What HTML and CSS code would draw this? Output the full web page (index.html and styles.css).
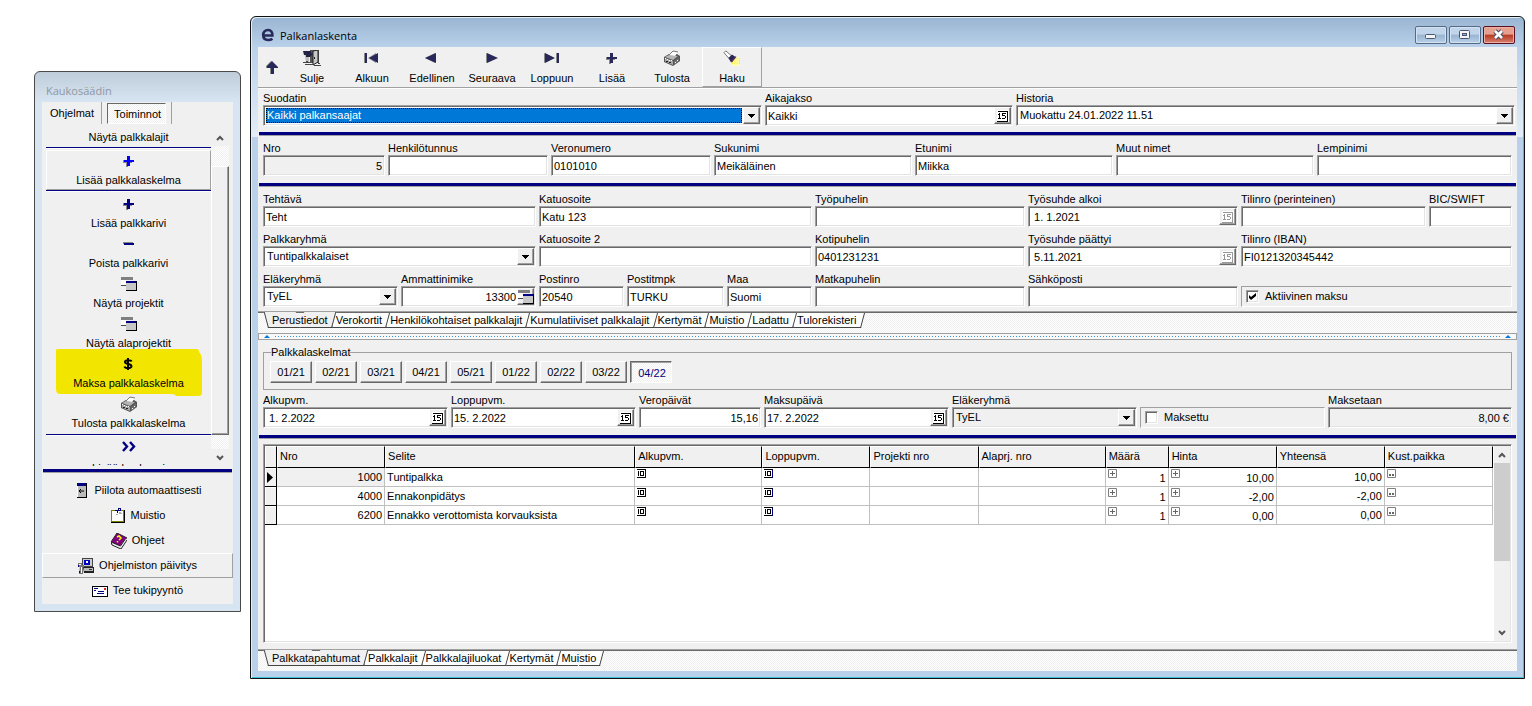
FILE: index.html
```html
<!DOCTYPE html>
<html lang="fi">
<head>
<meta charset="utf-8">
<title>Palkanlaskenta</title>
<link rel="stylesheet" href="styles.css">
</head>
<body>
<svg class="sprite" aria-hidden="true">
  <symbol id="i-printer" viewBox="0 0 16 16">
    <path d="M0 7l5-3h8l3 2v5l-7 5-9-4z" fill="#555"/>
    <path d="M1 7l4-2 9 1-5 4z" fill="#b4b4b4"/>
    <path d="M5 5l4-4 5 1-3 4z" fill="#fff"/>
    <path d="M5 5l4-4 5 1" fill="none" stroke="#777"/>
    <path d="M1 8l8 3v4l-8-3.500z" fill="#a8a8a8"/>
    <path d="M10 11l5-4v4l-5 4z" fill="#6c6c6c"/>
    <path d="M1 8h1v1H1zM3 9h1v1H3zM5 10h1v1H5zM7 10h1v1H7zM11 12h1v1h-1zM13 10h1v1h-1z" fill="#fff"/>
    <path d="M2 11h2v1H2zM5 12h2v1H5z" fill="#222"/>
  </symbol>
  <symbol id="i-windows" viewBox="0 0 16 16">
    <path d="M0 1h12v3H0z" fill="#808080"/><path d="M0 4h5v6H0z" fill="#fff"/><path d="M0 9h5v1H0z" fill="#444"/>
    <path d="M5 5h11v10H5z" fill="#000"/><path d="M5 5h10v9H5z" fill="#c8c8c8"/><path d="M5 5h10v2H5z" fill="#000080"/>
  </symbol>
  <symbol id="i-plus" viewBox="0 0 16 16"><path d="M2 7h4V3h1v4h4v3H7v4H5v-4H2z" fill="#888"/><path d="M3 7h3V3h3v4h4v2H9v4H6V9H3z" fill="currentColor"/></symbol>
  <symbol id="i-minus" viewBox="0 0 16 16"><path d="M2 6h10v2H2z" fill="#888"/><path d="M3 7h10v2H3z" fill="currentColor"/></symbol>
  <symbol id="i-cal" viewBox="0 0 12 12"><path d="M0 0h12v12H0z" class="cal-paper"/><path d="M1 1h10v1H1zM0 11h11v1H0z" fill="currentColor"/><path d="M10 2h1v9h-1z" class="cal-side"/><path d="M2 3h1v5h1v1H1V8h1V5H1V4h1zM5 3h4v1H6v1h2v1h1v2H8v1H5V8h3V6H5z" fill="currentColor"/></symbol>
  <symbol id="i-ten" viewBox="0 0 9 9"><path d="M0 0h9v9H0z" fill="#000"/><path d="M0 1h8v7H0z" fill="#fff"/><path d="M1 2h1v5H1zM3 2h4v5H3z" fill="#000"/><path d="M4 3h2v3H4z" fill="#fff"/><path d="M8 1h1v8H8z" fill="#000080"/></symbol>
  <symbol id="i-exp" viewBox="0 0 9 9"><path d="M.5.5h8v8h-8z" fill="#fff" stroke="#808080"/><path d="M2 4h5v1H2zM4 2h1v5H4z" fill="#666"/></symbol>
  <symbol id="i-dots" viewBox="0 0 9 9"><path d="M.5.5h8v8h-8z" fill="#fff" stroke="#808080"/><path d="M2 5h2v2H2zM5 5h2v2H5z" fill="#666"/></symbol>
  <symbol id="i-drop" viewBox="0 0 7 4"><path d="M0 0h7v1H6v1H5v1H4v1H3V3H2V2H1V1H0z" fill="#000"/></symbol>
  <symbol id="i-up" viewBox="0 0 8 6"><path d="M1 5l3-3 3 3" fill="none" stroke="#555" stroke-width="2"/></symbol>
  <symbol id="i-down" viewBox="0 0 8 6"><path d="M1 1l3 3 3-3" fill="none" stroke="#555" stroke-width="2"/></symbol>
</svg>

<main class="desktop">
  <aside class="window palette">
    <header class="palette-title">Kaukosäädin</header>
    <div class="palette-body">
      <nav class="modes">
        <button type="button" class="mode">Ohjelmat</button>
        <button type="button" class="mode mode-on"><span>Toiminnot</span></button>
      </nav>
      <div class="actions">
        <div class="action-list">
          <button type="button" class="action action-first">Näytä palkkalajit</button>
          <hr class="thin">
          <button type="button" class="action action-hot"><svg class="ico bright"><use href="#i-plus"/></svg>Lisää palkkalaskelma</button>
          <hr class="thin thin-wide">
          <button type="button" class="action"><svg class="ico navy"><use href="#i-plus"/></svg>Lisää palkkarivi</button>
          <button type="button" class="action"><svg class="ico navy"><use href="#i-minus"/></svg>Poista palkkarivi</button>
          <button type="button" class="action"><svg class="ico"><use href="#i-windows"/></svg>Näytä projektit</button>
          <button type="button" class="action"><svg class="ico"><use href="#i-windows"/></svg>Näytä alaprojektit</button>
          <button type="button" class="action marked">
            <svg class="marker" viewBox="0 0 146 47" preserveAspectRatio="none"><path d="M1 0h140q2 0 2 3 3 2 3 10v31q0 3-4 3h-22q-1-2-4-2H4q-4 0-4-5V2q0-2 1-2z" fill="#f2e600"/></svg>
            <svg class="ico" viewBox="0 0 16 16"><path d="M7 2v12M10.500 5.500C10 4 4 3.500 4 6s6.500 1.500 6.500 4.200S4 12.500 3.500 10.500" fill="none" stroke="#000" stroke-width="2"/></svg>Maksa palkkalaskelma</button>
          <button type="button" class="action"><svg class="ico"><use href="#i-printer"/></svg>Tulosta palkkalaskelma</button>
          <hr class="thin">
          <button type="button" class="action action-last"><svg class="ico navy" viewBox="0 0 16 16"><path d="M2 3l4 4.500L2 12M9 3l4 4.500L9 12" fill="none" stroke="currentColor" stroke-width="2.400"/></svg>Lisää kuukausi</button>
        </div>
        <div class="scroller">
          <button type="button" class="scroll-btn" aria-label="Ylös"><svg class="chev"><use href="#i-up"/></svg></button>
          <div class="scroll-track"><div class="scroll-thumb"></div></div>
          <button type="button" class="scroll-btn" aria-label="Alas"><svg class="chev"><use href="#i-down"/></svg></button>
        </div>
      </div>
      <hr class="bar">
      <div class="links">
        <button type="button" class="link"><svg class="ico" viewBox="0 0 16 16"><path d="M3 0h10v15H3z" fill="#000"/><path d="M3 0h9v14H3z" fill="#bbb"/><path d="M3 0h9v3H3z" fill="#000080"/><path d="M3 3h1v11H3z" fill="#fff"/><path d="M5 8h5M7 6L5 8l2 2" fill="none" stroke="#000"/></svg>Piilota automaattisesti</button>
        <button type="button" class="link"><svg class="ico" viewBox="0 0 16 16"><path d="M1 2h14v13H1z" fill="#000"/><path d="M1 2h13v12H1z" fill="#808000"/><path d="M2 3h11v10H2z" fill="#fff"/><path d="M5 2h6v1H5z" fill="#000080"/><path d="M8 0h3v3H8zM7 3h1v2H7z" fill="#000080"/><path d="M9 1h1v1H9z" fill="#fff"/><path d="M9 4h2v1h1v1H9zM6 6h2v1H6z" fill="#aaa"/></svg>Muistio</button>
        <button type="button" class="link"><svg class="ico" viewBox="0 0 16 16"><path d="M0 9l6-9 10 5-6 10z" fill="#800080"/><path d="M0 9l9 4 6-8 1 2-6 9-9-4z" fill="#eee"/><path d="M0 9l1 3 9 4 6-9M0 9l9.500 4L15 5M0 9L6 0l10 5" fill="none" stroke="#222"/><path d="M6 4l2-1 2 2-2 2M6.500 8v1.500" fill="none" stroke="#ff0" stroke-width="1.500"/></svg>Ohjeet</button>
        <button type="button" class="link link-hot"><svg class="ico" viewBox="0 0 16 16"><path d="M4 0h11v9H4z" fill="#444"/><path d="M5 1h9v7H5z" fill="#ccc"/><path d="M6 2h6v5H6z" fill="#0000c0"/><path d="M8 3h2v2H8z" fill="#fff"/><path d="M5 9h11v6H6z" fill="#222"/><path d="M6 10h9v3H6z" fill="#bbb"/><path d="M11 11h3v1h-3z" fill="#333"/><path d="M0 5h4v2h2v2H0zM2 8h3v8H1z" fill="#777"/><path d="M1 6h2v1H1zM3 9h1v6H3z" fill="#fff"/><path d="M0 7h1v2H0zM1 13h1v2H1z" fill="#000080"/></svg>Ohjelmiston päivitys</button>
        <button type="button" class="link"><svg class="ico" viewBox="0 0 16 16"><path d="M0 3h16v11H0z" fill="#000"/><path d="M1 4h14v9H1z" fill="#fff"/><path d="M2 5h4v1H2zM2 7h2v1H2z" fill="#000080"/><path d="M6 8h6v1H6zM5 10h7v1H5z" fill="#000080"/><path d="M12 5h2v2h-2z" fill="#e02020"/></svg>Tee tukipyyntö</button>
      </div>
    </div>
  </aside>

  <section class="window payroll">
    <header class="titlebar">
      <svg class="logo" viewBox="0 0 14 14"><path d="M3 7.500h8.400C11.600 4.300 9.900 2 7.100 2 4.100 2 2.200 4.200 2.200 7.100c0 3 2 4.900 5 4.900 1.700 0 3.100-.4 4.200-1.300" fill="none" stroke="#28285a" stroke-width="2.600"/></svg>
      <h1 class="caption">Palkanlaskenta</h1>
      <div class="win-buttons">
        <button type="button" class="win-btn" aria-label="Pienennä"><svg viewBox="0 0 30 16"><rect x="9.500" y="7.500" width="10" height="4" rx="1" fill="#f4f4f4" stroke="#4a5670"/></svg></button>
        <button type="button" class="win-btn" aria-label="Suurenna"><svg viewBox="0 0 30 16"><rect x="9.500" y="3.500" width="10" height="8" rx="1" fill="#f4f4f4" stroke="#4a5670"/><rect x="12.500" y="6.500" width="4" height="2" fill="#8fb0d4" stroke="#4a5670"/></svg></button>
        <button type="button" class="win-btn win-close" aria-label="Sulje ikkuna"><svg viewBox="0 0 30 16"><path d="M11 4l7 7M18 4l-7 7" stroke="#4a4a60" stroke-width="4.600"/><path d="M11 4l7 7M18 4l-7 7" stroke="#fff" stroke-width="2.600"/></svg></button>
      </div>
    </header>

    <div class="client">
      <nav class="toolbar">
        <button type="button" class="tool-up" aria-label="Ylös"><svg class="ico" viewBox="0 0 16 16"><path d="M7 2l5 5v2H9v6H6V9H2V7z" fill="#888"/><path d="M8 2l6 6v1h-4v6H7V9H3V7z" fill="#28285a"/></svg></button>
        <button type="button" class="tool"><svg class="ico wide" viewBox="0 0 18 16"><path d="M7 0h9v13H7z" fill="#555"/><path d="M10 1l5-1v12l-5 3z" fill="#c8c8c8" stroke="#222"/><path d="M11 7h1v2h-1z" fill="#222"/><path d="M1 1h5v11H3z" fill="#bbb"/><path d="M0 1h8v2l2 1-3 3H3V5H1z" fill="#222244"/><path d="M0 12h7v1H0zM2 14h8v1H2zM11 15h7v1h-7zM3 11h2v1H3zM15 13h2v1h-2z" fill="#444"/></svg>Sulje</button>
        <button type="button" class="tool"><svg class="ico" viewBox="0 0 16 16"><path d="M0 3h2v10H0zM12 3v10L4 8z" fill="#888"/><path d="M1 3h2v10H1zM14 3v10L5 8z" fill="#28285a"/></svg>Alkuun</button>
        <button type="button" class="tool"><svg class="ico" viewBox="0 0 16 16"><path d="M11 3v10L1 8z" fill="#888"/><path d="M12 3v10L1 8z" fill="#28285a"/></svg>Edellinen</button>
        <button type="button" class="tool"><svg class="ico" viewBox="0 0 16 16"><path d="M2 3v10l10-5z" fill="#888"/><path d="M3 3v10l11-5z" fill="#28285a"/></svg>Seuraava</button>
        <button type="button" class="tool"><svg class="ico" viewBox="0 0 16 16"><path d="M0 3v10l10-5zM12 3h2v10h-2z" fill="#888"/><path d="M1 3v10l10-5zM13 3h2v10h-2z" fill="#28285a"/></svg>Loppuun</button>
        <button type="button" class="tool"><svg class="ico ink"><use href="#i-plus"/></svg>Lisää</button>
        <button type="button" class="tool"><svg class="ico"><use href="#i-printer"/></svg>Tulosta</button>
        <button type="button" class="tool tool-hot"><svg class="ico wide" viewBox="0 0 18 18"><path d="M9 8h9v10H9z" fill="#ffffc0"/><path d="M9 13h1v1H9zM11 11h1v1h-1zM13 9h1v1h-1zM15 9h1v1h-1zM17 9h1v1h-1zM13 11h1v1h-1zM15 11h1v1h-1zM17 11h1v1h-1zM11 13h1v1h-1zM13 13h1v1h-1zM15 13h1v1h-1zM17 13h1v1h-1zM9 15h1v1H9zM11 15h1v1h-1zM13 15h1v1h-1zM15 15h1v1h-1zM17 15h1v1h-1z" fill="#ffe800"/><path d="M0 3l2-2 7 6-3 3z" fill="#fff" stroke="#666"/><path d="M5 9l4-4 4 3-5 6z" fill="#28285a"/><path d="M8 13l5-6 1 1-5 6z" fill="#603060"/></svg>Haku</button>
      </nav>

      <div class="section filter">
        <div class="field"><label for="f1">Suodatin</label><div class="box"><select id="f1" class="chosen"><option>Kaikki palkansaajat</option></select><span class="drop"><svg><use href="#i-drop"/></svg></span></div></div>
        <div class="field"><label for="f2">Aikajakso</label><div class="box"><input id="f2" value="Kaikki"><button type="button" class="pick" aria-label="Kalenteri"><svg><use href="#i-cal"/></svg></button></div></div>
        <div class="field"><label for="f3">Historia</label><div class="box"><select id="f3"><option>Muokattu 24.01.2022 11.51</option></select><span class="drop"><svg><use href="#i-drop"/></svg></span></div></div>
      </div>
      <hr class="bar">

      <div class="section person">
        <div class="field"><label for="p1">Nro</label><div class="box ro"><input id="p1" class="num" value="5" readonly></div></div>
        <div class="field"><label for="p2">Henkilötunnus</label><div class="box"><input id="p2"></div></div>
        <div class="field"><label for="p3">Veronumero</label><div class="box"><input id="p3" value="0101010"></div></div>
        <div class="field"><label for="p4">Sukunimi</label><div class="box"><input id="p4" value="Meikäläinen"></div></div>
        <div class="field"><label for="p5">Etunimi</label><div class="box"><input id="p5" value="Miikka"></div></div>
        <div class="field"><label for="p6">Muut nimet</label><div class="box"><input id="p6"></div></div>
        <div class="field"><label for="p7">Lempinimi</label><div class="box"><input id="p7"></div></div>
      </div>
      <hr class="bar">

      <div class="details">
        <div class="row row-a">
          <div class="field"><label for="a1">Tehtävä</label><div class="box"><input id="a1" value="Teht"></div></div>
          <div class="field"><label for="a2">Katuosoite</label><div class="box"><input id="a2" value="Katu 123"></div></div>
          <div class="field"><label for="a3">Työpuhelin</label><div class="box"><input id="a3"></div></div>
          <div class="field"><label for="a4">Työsuhde alkoi</label><div class="box"><input id="a4" value=" 1. 1.2021"><button type="button" class="pick" disabled aria-label="Kalenteri"><svg><use href="#i-cal"/></svg></button></div></div>
          <div class="field"><label for="a5">Tilinro (perinteinen)</label><div class="box"><input id="a5"></div></div>
          <div class="field"><label for="a6">BIC/SWIFT</label><div class="box"><input id="a6"></div></div>
        </div>
        <div class="row row-b">
          <div class="field"><label for="b1">Palkkaryhmä</label><div class="box"><select id="b1"><option>Tuntipalkkalaiset</option></select><span class="drop"><svg><use href="#i-drop"/></svg></span></div></div>
          <div class="field"><label for="b2">Katuosoite 2</label><div class="box"><input id="b2"></div></div>
          <div class="field"><label for="b3">Kotipuhelin</label><div class="box"><input id="b3" value="0401231231"></div></div>
          <div class="field"><label for="b4">Työsuhde päättyi</label><div class="box"><input id="b4" value=" 5.11.2021"><button type="button" class="pick" disabled aria-label="Kalenteri"><svg><use href="#i-cal"/></svg></button></div></div>
          <div class="field"><label for="b5">Tilinro (IBAN)</label><div class="box"><input id="b5" value="FI0121320345442"></div></div>
        </div>
        <div class="row row-c">
          <div class="field"><label for="c1">Eläkeryhmä</label><div class="box"><select id="c1"><option>TyEL</option></select><span class="drop"><svg><use href="#i-drop"/></svg></span></div></div>
          <div class="field"><label for="c2">Ammattinimike</label><div class="box"><input id="c2" class="num" value="13300"><button type="button" class="pick" aria-label="Valitse"><svg><use href="#i-windows"/></svg></button></div></div>
          <div class="field"><label for="c3">Postinro</label><div class="box"><input id="c3" value="20540"></div></div>
          <div class="field"><label for="c4">Postitmpk</label><div class="box"><input id="c4" value="TURKU"></div></div>
          <div class="field"><label for="c5">Maa</label><div class="box"><input id="c5" value="Suomi"></div></div>
          <div class="field"><label for="c6">Matkapuhelin</label><div class="box"><input id="c6"></div></div>
          <div class="field"><label for="c7">Sähköposti</label><div class="box"><input id="c7"></div></div>
          <label class="check"><input type="checkbox" checked>Aktiivinen maksu</label>
        </div>
      </div>

      <nav class="tabs">
        <button type="button" class="tab tab-on">Perustiedot</button>
        <button type="button" class="tab">Verokortit</button>
        <button type="button" class="tab">Henkilökohtaiset palkkalajit</button>
        <button type="button" class="tab">Kumulatiiviset palkkalajit</button>
        <button type="button" class="tab">Kertymät</button>
        <button type="button" class="tab">Muistio</button>
        <button type="button" class="tab">Ladattu</button>
        <button type="button" class="tab">Tulorekisteri</button>
      </nav>
      <div class="splitter"><i class="tri"></i><i class="dots"></i><i class="tri"></i></div>

      <fieldset class="periods">
        <legend>Palkkalaskelmat</legend>
        <div class="period-row">
          <button type="button" class="period">01/21</button>
          <button type="button" class="period">02/21</button>
          <button type="button" class="period">03/21</button>
          <button type="button" class="period">04/21</button>
          <button type="button" class="period">05/21</button>
          <button type="button" class="period">01/22</button>
          <button type="button" class="period">02/22</button>
          <button type="button" class="period">03/22</button>
          <button type="button" class="period period-on">04/22</button>
        </div>
      </fieldset>

      <div class="section slip">
        <div class="field"><label for="s1">Alkupvm.</label><div class="box"><input id="s1" value=" 1. 2.2022"><button type="button" class="pick" aria-label="Kalenteri"><svg><use href="#i-cal"/></svg></button></div></div>
        <div class="field"><label for="s2">Loppupvm.</label><div class="box"><input id="s2" value="15. 2.2022"><button type="button" class="pick" aria-label="Kalenteri"><svg><use href="#i-cal"/></svg></button></div></div>
        <div class="field"><label for="s3">Veropäivät</label><div class="box"><input id="s3" class="num" value="15,16"></div></div>
        <div class="field"><label for="s4">Maksupäivä</label><div class="box"><input id="s4" value="17. 2.2022"><button type="button" class="pick" aria-label="Kalenteri"><svg><use href="#i-cal"/></svg></button></div></div>
        <div class="field"><label for="s5">Eläkeryhmä</label><div class="box ro"><select id="s5"><option>TyEL</option></select><span class="drop"><svg><use href="#i-drop"/></svg></span></div></div>
        <label class="check"><input type="checkbox">Maksettu</label>
        <div class="field"><label for="s6">Maksetaan</label><div class="box ro"><input id="s6" class="num" value="8,00 €" readonly></div></div>
      </div>
      <hr class="bar">

      <div class="grid">
        <div class="grid-view">
          <table class="lines">
            <colgroup><col class="w-mark"><col class="w-m"><col class="w-xl"><col class="w-l"><col class="w-m"><col class="w-m"><col class="w-l"><col class="w-s"><col class="w-m"><col class="w-m"><col class="w-m"></colgroup>
            <thead><tr><th></th><th>Nro</th><th>Selite</th><th>Alkupvm.</th><th>Loppupvm.</th><th>Projekti nro</th><th>Alaprj. nro</th><th>Määrä</th><th>Hinta</th><th>Yhteensä</th><th>Kust.paikka</th></tr></thead>
            <tbody>
              <tr><td class="mark"><svg viewBox="0 0 6 11"><path d="M0 0l6 5.500L0 11z" fill="#000"/></svg></td><td class="r current">1000</td><td>Tuntipalkka</td><td><svg class="mini"><use href="#i-ten"/></svg></td><td><svg class="mini"><use href="#i-ten"/></svg></td><td></td><td></td><td><div class="split"><svg class="mini"><use href="#i-exp"/></svg>1</div></td><td><div class="split"><svg class="mini"><use href="#i-exp"/></svg>10,00</div></td><td class="r">10,00</td><td><svg class="mini"><use href="#i-dots"/></svg></td></tr>
              <tr><td class="mark"></td><td class="r">4000</td><td>Ennakonpidätys</td><td><svg class="mini"><use href="#i-ten"/></svg></td><td><svg class="mini"><use href="#i-ten"/></svg></td><td></td><td></td><td><div class="split"><svg class="mini"><use href="#i-exp"/></svg>1</div></td><td><div class="split"><svg class="mini"><use href="#i-exp"/></svg>-2,00</div></td><td class="r">-2,00</td><td><svg class="mini"><use href="#i-dots"/></svg></td></tr>
              <tr><td class="mark"></td><td class="r">6200</td><td>Ennakko verottomista korvauksista</td><td><svg class="mini"><use href="#i-ten"/></svg></td><td><svg class="mini"><use href="#i-ten"/></svg></td><td></td><td></td><td><div class="split"><svg class="mini"><use href="#i-exp"/></svg>1</div></td><td><div class="split"><svg class="mini"><use href="#i-exp"/></svg>0,00</div></td><td class="r">0,00</td><td><svg class="mini"><use href="#i-dots"/></svg></td></tr>
            </tbody>
          </table>
        </div>
        <div class="grid-scroll">
          <button type="button" class="scroll-btn" aria-label="Ylös"><svg class="chev"><use href="#i-up"/></svg></button>
          <div class="grid-track"><div class="grid-thumb"></div></div>
          <button type="button" class="scroll-btn" aria-label="Alas"><svg class="chev"><use href="#i-down"/></svg></button>
        </div>
      </div>

      <nav class="tabs">
        <button type="button" class="tab tab-on">Palkkatapahtumat</button>
        <button type="button" class="tab">Palkkalajit</button>
        <button type="button" class="tab">Palkkalajiluokat</button>
        <button type="button" class="tab">Kertymät</button>
        <button type="button" class="tab">Muistio</button>
      </nav>
    </div>
  </section>
</main>
</body>
</html>
```
FILE: styles.css
```css
:root {
  --face: #f0f0f0;
  --shade: #a0a0a0;
  --dark: #696969;
  --light: #e3e3e3;
  --navy: #000080;
  --ink: #28285a;
  --hatch: repeating-conic-gradient(#fff 0 25%, #f0f0f0 0 50%) 0 0 / 2px 2px;
}

* { box-sizing: border-box; }

body {
  margin: 0;
  background: #fff;
  color: #000;
  font: 11px/13px "Liberation Sans", Arial, sans-serif;
}

button, input, select {
  margin: 0;
  padding: 0;
  border: 0;
  border-radius: 0;
  background: none;
  color: inherit;
  font: inherit;
}

svg { display: block; flex: none; }
.sprite { position: absolute; width: 0; height: 0; }
.ico { width: 16px; height: 16px; }
.ico.wide { width: 18px; }
.bright { color: #00f; }
.navy { color: var(--navy); }
.ink { color: var(--ink); }

.desktop {
  display: flex;
  gap: 9px;
  height: 100vh;
  padding: 16px 7px 27px 34px;
}

.window { display: flex; flex-direction: column; border: 1px solid #222; }

/* Palette */
.palette {
  width: 207px;
  margin-top: 55px;
  align-self: flex-start;
  flex: none;
  padding: 0 7px 7px;
  border-color: #4a4a4a;
  border-radius: 6px 6px 0 0;
  background: linear-gradient(#bfcddb, #d7e4f2 30px);
}

.palette-title {
  height: 30px;
  padding: 11px 4px 0;
  color: #8f979f;
  font: 11px/16px "Open Sans", "Noto Sans", sans-serif;
}

.palette-body { background: var(--face); }
.modes { display: flex; gap: 5px; height: 27px; }
.mode { height: 22px; padding: 0 7px 0 8px; border-right: 1px solid var(--shade); }
.mode-on { padding: 0 5px 0 0; }
.mode-on span {
  display: block;
  padding: 4px 4px 2px 6px;
  border: 1px solid;
  border-color: var(--dark) #fff #fff var(--dark);
  background: var(--hatch);
}

.actions { display: flex; height: 337px; padding: 0 4px; }
.action-list { flex: 1; min-width: 0; overflow: hidden; }
.action {
  position: relative;
  display: flex;
  flex-direction: column;
  align-items: center;
  gap: 5px;
  width: 100%;
  height: 40px;
  padding-top: 2px;
  white-space: nowrap;
}
.action-first { height: 18px; }
.action-last { gap: 7px; }
.action-hot { border: 1px solid; border-color: #fff var(--shade) var(--shade) #fff; }
.thin { margin: 0 0 1px; border: 0; border-top: 1px solid var(--navy); border-bottom: 1px solid #fff; }
.thin-wide { margin-bottom: 2px; }
.marked { isolation: isolate; }
.marker { position: absolute; z-index: -1; top: -5px; left: 10px; width: 146px; height: 47px; }

.scroller { display: flex; flex-direction: column; width: 18px; }
.scroll-btn { display: grid; place-items: center; height: 17px; }
.chev { width: 8px; height: 6px; }
.scroll-track { flex: 1; padding: 20px 0 14px; background: var(--hatch); }
.scroll-thumb { height: 100%; background: var(--face); border: 1px solid; border-color: #fff var(--dark) var(--dark) #fff; box-shadow: inset -1px -1px var(--shade); }

.bar { width: calc(100% - 2px); height: 4px; margin: 0 1px; border: 0; border-bottom: 1px solid var(--shade); background: var(--navy); flex: none; }

.palette .bar { margin-top: 3px; }
.links { padding: 5px 0 1px; }
.link {
  display: flex;
  align-items: center;
  justify-content: center;
  gap: 5px;
  width: 100%;
  height: 25px;
}
.link-hot { border: 1px solid; border-color: #fff var(--shade) var(--shade) #fff; }

/* Main window */
.payroll {
  flex: 1;
  min-width: 0;
  padding: 0 6px 6px;
  border-color: #111;
  border-radius: 6px 6px 0 0;
  box-shadow: inset 1px 1px #e4eefa, inset -1px -1px #3fc1d8;
  background: linear-gradient(#99b4d1, #b9d1ea 30px, #e4edf8 120px, #b9d1ea 120px);
}

.titlebar { display: flex; height: 30px; padding: 10px 3px 0 4px; }
.logo { width: 14px; height: 14px; margin-top: 1px; }
.caption { margin: 1px 0 0 5px; font: 11px/16px "Open Sans", "Noto Sans", sans-serif; }
.win-buttons { display: flex; gap: 2px; margin: -1px 0 0 auto; }
.win-btn {
  width: 32px;
  height: 18px;
  border: 1px solid #566a86;
  border-radius: 2px;
  background: linear-gradient(#c0d4ea 45%, #98b4d0 50%, #b9d1ea);
  box-shadow: inset 0 0 0 1px #d4e2f2;
}
.win-btn svg { width: 30px; height: 16px; }
.win-close { border-color: #5a1020; background: linear-gradient(#e6a090 45%, #b83a20 50%, #d88070); box-shadow: inset 0 0 0 1px #eab0a4; }

.client { display: flex; flex: 1; flex-direction: column; min-height: 0; margin: 0 1px 1px; background: var(--face); }

.toolbar { display: flex; flex: none; height: 42px; border-bottom: 1px solid #fff; box-shadow: inset 0 -1px var(--shade); }
.tool-up { display: grid; place-items: center; width: 24px; height: 40px; padding-left: 3px; }
.tool {
  display: flex;
  flex-direction: column;
  align-items: center;
  gap: 6px;
  width: 60px;
  height: 40px;
  padding-top: 3px;
}
.tool-hot { padding-top: 2px; border: 1px solid; border-color: #fff var(--shade) var(--shade) #fff; }

.section, .row { display: grid; flex: none; column-gap: 3px; align-items: end; }
.filter { grid-template-columns: 499fr 248fr 499fr; padding: 3px 2px 6px 5px; }
.person { grid-template-columns: 122fr 160fr 160fr 198fr 198fr 198fr 195fr; padding: 6px 5px 7px; }
.details { display: flex; flex: none; flex-direction: column; gap: 6px; padding: 6px 5px 4px; }
.row-a { grid-template-columns: 273fr 273fr 210fr 210fr 185fr 83fr; }
.row-b { grid-template-columns: 273fr 273fr 210fr 210fr 271fr; }
.row-c { grid-template-columns: 135fr 135fr 85fr 97fr 85fr 210fr 210fr 271fr; }
.slip { grid-template-columns: 185fr 185fr 122fr 185fr 185fr 185fr 184fr; padding: 4px 5px 7px; }

.field { display: flex; flex-direction: column; min-width: 0; white-space: nowrap; }
.box {
  display: flex;
  height: 21px;
  padding: 1px;
  border: 1px solid;
  border-color: var(--shade) #fff #fff var(--shade);
  background: #fff;
  box-shadow: inset 1px 1px var(--dark), inset -1px -1px var(--light);
}
.box.ro { background: var(--face); }
.box input, .box select { flex: 1; min-width: 0; width: 0; height: 17px; padding: 0 1px; outline: 0; }
.box select { padding-left: 2px; appearance: none; }
.box .chosen { margin: 1px; padding-left: 1px; height: 15px; background: #0078d7; color: #fff; outline: 1px dotted #000; outline-offset: -1px; }
.box .num { text-align: right; }
.drop, .pick {
  display: grid;
  place-items: center;
  width: 17px;
  height: 17px;
  border: 1px solid;
  border-color: #fff var(--dark) var(--dark) #fff;
  background: var(--face);
  box-shadow: inset -1px -1px var(--shade);
}
.drop { pointer-events: none; }
.drop svg { width: 7px; height: 4px; }
.pick svg { width: 12px; height: 12px; }
.pick:has([href="#i-windows"]) svg { width: 16px; height: 16px; }
.cal-paper { fill: #fff; }
.cal-side { fill: currentColor; }
.pick:disabled { color: #999; }

.check {
  display: flex;
  align-items: center;
  gap: 6px;
  height: 21px;
  padding-left: 4px;
  border: 1px solid;
  border-color: var(--shade) #fff #fff var(--shade);
}
.check input {
  appearance: none;
  display: grid;
  width: 13px;
  height: 13px;
  border: 1px solid;
  border-color: var(--shade) #fff #fff var(--shade);
  background: #fff;
  box-shadow: inset 1px 1px var(--dark), inset -1px -1px var(--light);
}
.check input:checked::before {
  content: "";
  width: 7px;
  height: 7px;
  margin: 2px;
  background: #000;
  clip-path: polygon(0 29%, 29% 57%, 100% 0, 100% 43%, 29% 100%, 0 71%);
}

.tabs {
  display: flex;
  flex: none;
  height: 22px;
  padding-left: 10px;
  border-top: 1px solid var(--shade);
  box-shadow: inset 0 1px var(--dark);
  background: var(--hatch);
}
.tab { position: relative; z-index: 1; height: 16px; padding: 1px 4px 0; white-space: nowrap; }
.tab::before, .tab::after {
  content: "";
  position: absolute;
  z-index: -1;
  top: 1px;
  bottom: 0;
  border-bottom: 1px solid #444;
  background: #fff;
}
.tab::before { left: 0; right: 50%; border-left: 1px solid #444; transform: skewX(15deg); transform-origin: bottom; }
.tab::after { left: 50%; right: 0; border-right: 1px solid #444; transform: skewX(-15deg); transform-origin: bottom; }
.tab:nth-child(7) { z-index: 2; }
.tab:nth-child(6) { z-index: 3; }
.tab:nth-child(5) { z-index: 4; }
.tab:nth-child(4) { z-index: 5; }
.tab:nth-child(3) { z-index: 6; }
.tab:nth-child(2) { z-index: 7; }
.tab:nth-child(1) { z-index: 8; }
.tab-on::before, .tab-on::after { top: 0; background: var(--face); }

.splitter { display: flex; flex: none; align-items: center; gap: 5px; height: 7px; padding: 0 5px; border: 1px solid var(--shade); background: #f8f8f8; }
.tri { border: 3px solid transparent; border-top: 0; border-bottom-color: #0078d7; }
.dots { flex: 1; height: 1px; background: repeating-linear-gradient(90deg, #3a8fd0 0 1px, transparent 1px 3px); }

.periods { flex: none; margin: 6px 5px 0; padding: 2px 6px 6px; border: 1px solid var(--shade); min-width: 0; }
.periods legend { margin-left: 1px; padding: 0; }
.period-row { display: flex; gap: 3px; }
.period {
  width: 42px;
  height: 22px;
  border: 1px solid;
  border-color: #fff var(--dark) var(--dark) #fff;
  box-shadow: inset -1px -1px var(--shade);
}
.period-on { color: var(--navy); padding: 2px 0 0 2px; border-color: var(--dark) #fff #fff var(--dark); box-shadow: inset 1px 1px var(--shade); background: var(--hatch); }

.grid {
  display: flex;
  flex: 1;
  min-height: 0;
  margin: 5px 5px 6px;
  padding: 1px;
  border: 1px solid;
  border-color: var(--shade) #fff #fff var(--shade);
  background: #fff;
  box-shadow: inset 1px 1px var(--dark), inset -1px -1px var(--light);
}
.grid-view { flex: 1; min-width: 0; overflow: hidden; }
.lines { width: 1228px; table-layout: fixed; border-collapse: separate; border-spacing: 0; }
.w-mark { width: 12px; }
.w-s { width: 63px; }
.w-m { width: 108px; }
.w-l { width: 127px; }
.w-xl { width: 250px; }
.lines th {
  height: 22px;
  padding: 0 2px 1px;
  border: 1px solid;
  border-color: #fff #000 #000 #fff;
  background: var(--face);
  font-weight: normal;
  text-align: left;
  white-space: nowrap;
}
.lines td { height: 19px; padding: 0 2px; border: 1px solid #c0c0c0; border-width: 0 1px 1px 0; white-space: nowrap; }
.lines .mark { padding: 0 2px; border-color: #000; background: var(--face); box-shadow: inset 1px 1px #fff; }
.mark svg { width: 6px; height: 11px; }
.lines .r { text-align: right; }
.lines .current { background: var(--face); }
.mini { width: 9px; height: 9px; margin-bottom: 7px; }
.split { display: flex; align-items: flex-end; justify-content: space-between; height: 16px; }

.grid-scroll { display: flex; flex-direction: column; width: 16px; background: var(--face); }
.grid-track { flex: 1; }
.grid-thumb { height: 98px; background: #cdcdcd; }
```
